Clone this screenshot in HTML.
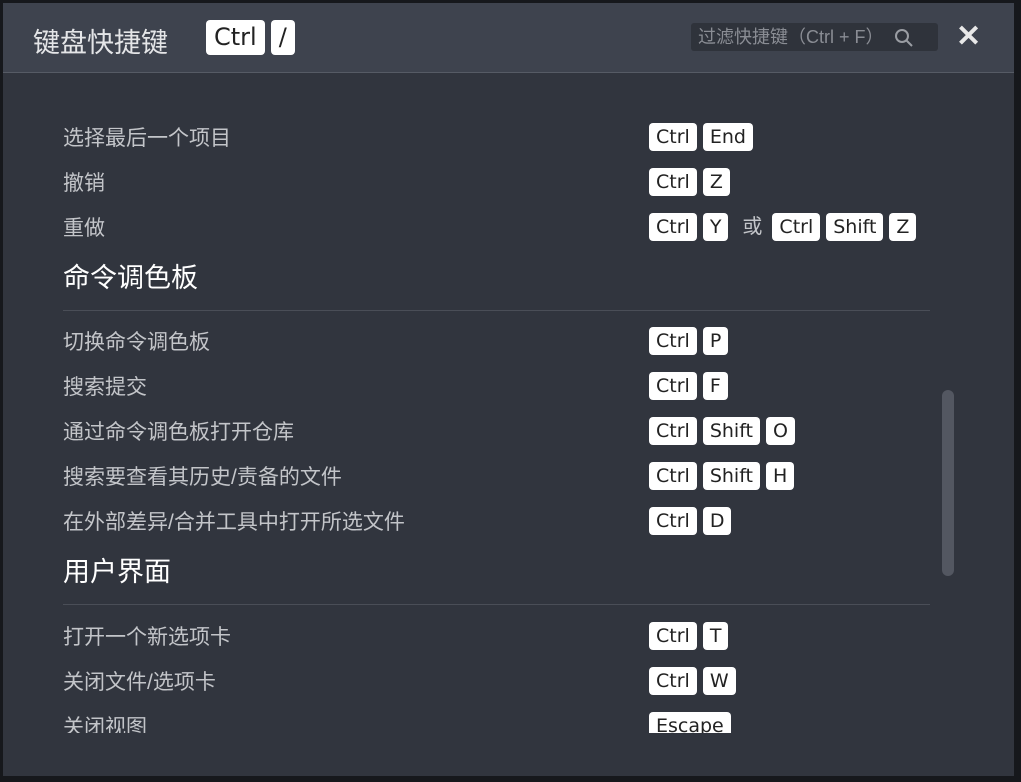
<!DOCTYPE html>
<html><head><meta charset="utf-8"><style>
body{margin:0;width:1021px;height:782px;background:#16181c;overflow:hidden;font-family:"Liberation Sans","Noto Sans CJK SC",sans-serif;position:relative}
.dlg{position:absolute;left:3px;top:3px;width:1011px;height:773px;background:#31353e;overflow:hidden}
.hd{position:absolute;left:0;top:0;width:1011px;height:69px;background:#3e434e;border-bottom:1px solid #565b65}
.title{position:absolute;left:30px;top:18px;font-size:27px;color:#e4e5e7}
.k{display:inline-block;background:#fff;color:#222;border-radius:4px;height:28px;line-height:28px;padding:0 7px;font-family:"DejaVu Sans",sans-serif;font-size:19px;margin-right:6px;vertical-align:middle}
.hk{position:absolute;left:203px;top:17px}
.hk .k{height:35px;line-height:35px;font-size:24px;margin-right:6px;padding:0 8px}
.search{position:absolute;left:688px;top:20px;width:247px;height:28px;background:#2f333b;border-radius:3px;color:#8a8d94;font-size:18px;line-height:28px;padding-left:7px;box-sizing:border-box}
.x{position:absolute;left:953px;top:18px;color:#e8e8e8;font-size:30px;font-weight:bold;line-height:32px}
.clip{position:absolute;left:0;top:70px;width:1011px;height:660px;overflow:hidden}
.row{position:absolute;left:60px;height:28px;line-height:32px;font-size:21px;color:#c3c5c9;width:880px}
.row .ks{position:absolute;left:586px;top:0;white-space:nowrap;line-height:28px}
.or{color:#c3c5c9;margin:0 10px 0 8px;font-size:20px;vertical-align:middle}
.sec{position:absolute;left:60px;font-size:27px;color:#fff;line-height:36px}
.line{position:absolute;left:60px;width:867px;height:1px;background:#4a4e57}
.sb{position:absolute;left:939px;top:387px;width:12px;height:186px;border-radius:6px;background:#535761}
</style></head><body>
<div class="dlg">
<div class="hd">
<div class="title">键盘快捷键</div>
<div class="hk"><span class="k">Ctrl</span><span class="k">/</span></div>
<div class="search">过滤快捷键（Ctrl + F）
<svg style="position:absolute;left:203px;top:5px" width="20" height="20" viewBox="0 0 20 20"><circle cx="8" cy="8" r="6" fill="none" stroke="#9a9da3" stroke-width="2"/><path d="M12.5 12.5L18 18" stroke="#9a9da3" stroke-width="2"/></svg></div>
<div class="x">✕</div>
</div>
<div class="clip">
<div class="row" style="top:50px">选择最后一个项目<span class="ks"><span class="k">Ctrl</span><span class="k">End</span></span></div>
<div class="row" style="top:95px">撤销<span class="ks"><span class="k">Ctrl</span><span class="k">Z</span></span></div>
<div class="row" style="top:140px">重做<span class="ks"><span class="k">Ctrl</span><span class="k">Y</span><span class="or">或</span><span class="k">Ctrl</span><span class="k">Shift</span><span class="k">Z</span></span></div>
<div class="sec" style="top:187px">命令调色板</div>
<div class="line" style="top:237px"></div>
<div class="row" style="top:254px">切换命令调色板<span class="ks"><span class="k">Ctrl</span><span class="k">P</span></span></div>
<div class="row" style="top:299px">搜索提交<span class="ks"><span class="k">Ctrl</span><span class="k">F</span></span></div>
<div class="row" style="top:344px">通过命令调色板打开仓库<span class="ks"><span class="k">Ctrl</span><span class="k">Shift</span><span class="k">O</span></span></div>
<div class="row" style="top:389px">搜索要查看其历史/责备的文件<span class="ks"><span class="k">Ctrl</span><span class="k">Shift</span><span class="k">H</span></span></div>
<div class="row" style="top:434px">在外部差异/合并工具中打开所选文件<span class="ks"><span class="k">Ctrl</span><span class="k">D</span></span></div>
<div class="sec" style="top:481px">用户界面</div>
<div class="line" style="top:531px"></div>
<div class="row" style="top:549px">打开一个新选项卡<span class="ks"><span class="k">Ctrl</span><span class="k">T</span></span></div>
<div class="row" style="top:594px">关闭文件/选项卡<span class="ks"><span class="k">Ctrl</span><span class="k">W</span></span></div>
<div class="row" style="top:639px">关闭视图<span class="ks"><span class="k">Escape</span></span></div>
</div>
<div class="sb"></div>
</div>
</body></html>
